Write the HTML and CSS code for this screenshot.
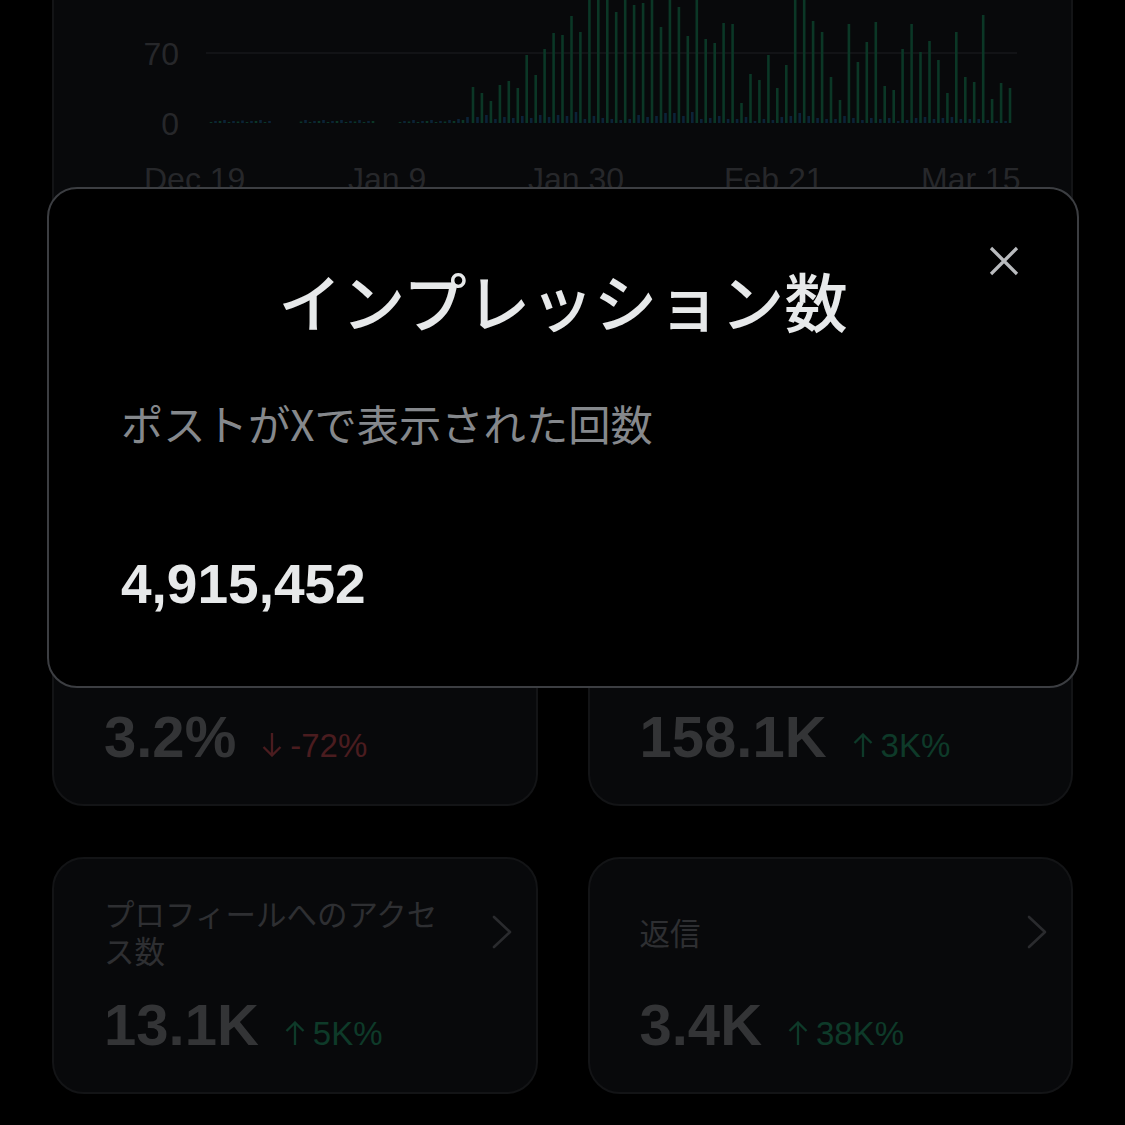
FILE: index.html
```html
<!DOCTYPE html>
<html lang="ja">
<head>
<meta charset="utf-8">
<title>インプレッション数</title>
<link rel="stylesheet" href="styles.css">
</head>
<body>
<div class="page">
  <section class="card chart-card">
    <svg class="chart" width="1018" height="240" viewBox="53 0 1018 240" xmlns="http://www.w3.org/2000/svg">
      <line class="grid-line" x1="205" y1="53" x2="1016" y2="53"/>
      <text class="axis-label" x="178" y="65" text-anchor="end">70</text>
      <text class="axis-label" x="178" y="135" text-anchor="end">0</text>
      <path class="bars-small-g" d="M210 123V122M219 123V121M228 123V122M237 123V121.5M246 123V122M255 123V121M264 123V122M300 123V121.5M309 123V122M318 123V121M327 123V122M336 123V121M345 123V122M354 123V121.5M363 123V122M372 123V121M399 123V122M408 123V121.5M417 123V122M426 123V121M435 123V122M444 123V121.5M453 123V121M462 123V120"/>
      <path class="bars-small-b" d="M214.5 123V121M223.5 123V120M232.5 123V121M241.5 123V120.5M250.5 123V121M259.5 123V120M268.5 123V121M304.5 123V120M313.5 123V121M322.5 123V120M331.5 123V121M340.5 123V120M349.5 123V121M358.5 123V120M367.5 123V121M403.5 123V121M412.5 123V120M421.5 123V121M430.5 123V120M439.5 123V121M448.5 123V120M457.5 123V119M466.5 123V117"/>
      <path class="bars-g" d="M472 123V87M480.9 123V93M489.9 123V101M498.9 123V85M507.8 123V81M516.8 123V88M525.7 123V55M534.7 123V75M543.6 123V49M552.6 123V33M561.5 123V35M570.5 123V16M579.4 123V32M588.4 123V-5M597.3 123V-5M606.3 123V-5M615.2 123V12M624.2 123V-5M633.1 123V5M642.1 123V3M651 123V-5M660 123V27M668.9 123V-5M677.9 123V7M686.8 123V36M695.8 123V-5M704.7 123V39M713.7 123V43M722.6 123V23M731.6 123V24M740.5 123V103M749.5 123V74M758.4 123V80M767.4 123V55M776.3 123V88M785.3 123V65M794.2 123V-5M803.2 123V-5M812.1 123V21M821.1 123V32M830 123V77M839 123V100M847.9 123V24M856.9 123V62M865.8 123V42M874.8 123V22M883.7 123V86M892.7 123V90M901.6 123V49M910.6 123V24M919.5 123V52M928.5 123V41M937.4 123V60M946.4 123V93M955.3 123V32M964.3 123V77M973.2 123V82M982.2 123V15M991.1 123V99M1000.1 123V83M1009 123V88"/>
      <path class="bars-b" d="M476.5 123V117M485.4 123V115M494.4 123V119M503.4 123V117M512.3 123V118M521.3 123V116M530.2 123V118M539.2 123V115M548.1 123V117M557.1 123V115M566 123V116M575 123V112M583.9 123V119M592.9 123V116M601.8 123V118M610.8 123V119M619.7 123V120M628.7 123V119M637.6 123V115M646.6 123V117M655.5 123V116M664.5 123V113M673.4 123V113M682.4 123V116M691.3 123V112M700.3 123V119M709.2 123V118M718.2 123V116M727.1 123V119M736.1 123V119M745 123V117M754 123V121M762.9 123V119M771.9 123V120M780.8 123V117M789.8 123V116M798.7 123V113M807.7 123V116M816.6 123V118M825.6 123V119M834.5 123V119M843.5 123V116M852.4 123V118M861.4 123V120M870.3 123V118M879.3 123V119M888.2 123V118M897.2 123V121M906.1 123V120M915.1 123V118M924 123V117M933 123V119M941.9 123V118M950.9 123V117M959.8 123V119M968.8 123V119M977.7 123V119M986.7 123V120M995.6 123V121M1004.6 123V121"/>
      <text class="axis-label" x="143" y="190">Dec 19</text>
      <text class="axis-label" x="347" y="190">Jan 9</text>
      <text class="axis-label" x="527" y="190">Jan 30</text>
      <text class="axis-label" x="723" y="190">Feb 21</text>
      <text class="axis-label" x="920" y="190">Mar 15</text>
    </svg>
  </section>

  <div class="stats">
    <div class="card stat">
      <div class="stat-head">
        <span class="stat-label">エンゲージメント率</span>
        <svg class="chev" width="20" height="34" viewBox="0 0 20 34"><polyline points="2,2 18,17 2,32"/></svg>
      </div>
      <div class="stat-row">
        <span class="stat-value">3.2%</span>
        <span class="stat-change down"><svg class="arrow" width="20" height="24" viewBox="0 0 20 24"><path d="M10 0V22.5M1.5 14L10 22.5L18.5 14"/></svg>-72%</span>
      </div>
    </div>
    <div class="card stat">
      <div class="stat-head">
        <span class="stat-label">エンゲージメント</span>
        <svg class="chev" width="20" height="34" viewBox="0 0 20 34"><polyline points="2,2 18,17 2,32"/></svg>
      </div>
      <div class="stat-row">
        <span class="stat-value">158.1K</span>
        <span class="stat-change up"><svg class="arrow" width="20" height="24" viewBox="0 0 20 24"><path d="M10 24V1.5M1.5 10L10 1.5L18.5 10"/></svg>3K%</span>
      </div>
    </div>
    <div class="card stat">
      <div class="stat-head">
        <span class="stat-label">プロフィールへのアクセス数</span>
        <svg class="chev" width="20" height="34" viewBox="0 0 20 34"><polyline points="2,2 18,17 2,32"/></svg>
      </div>
      <div class="stat-row">
        <span class="stat-value">13.1K</span>
        <span class="stat-change up"><svg class="arrow" width="20" height="24" viewBox="0 0 20 24"><path d="M10 24V1.5M1.5 10L10 1.5L18.5 10"/></svg>5K%</span>
      </div>
    </div>
    <div class="card stat">
      <div class="stat-head">
        <span class="stat-label">返信</span>
        <svg class="chev" width="20" height="34" viewBox="0 0 20 34"><polyline points="2,2 18,17 2,32"/></svg>
      </div>
      <div class="stat-row">
        <span class="stat-value">3.4K</span>
        <span class="stat-change up"><svg class="arrow" width="20" height="24" viewBox="0 0 20 24"><path d="M10 24V1.5M1.5 10L10 1.5L18.5 10"/></svg>38K%</span>
      </div>
    </div>
  </div>
</div>

<div class="modal" role="dialog">
  <button class="modal-close" aria-label="閉じる">
    <svg width="30" height="30" viewBox="0 0 30 30"><path d="M2 2L28 28M28 2L2 28"/></svg>
  </button>
  <h2 class="modal-title">インプレッション数</h2>
  <p class="modal-desc">ポストがXで表示された回数</p>
  <p class="modal-number">4,915,452</p>
</div>
</body>
</html>
```

FILE: styles.css
```css
* { box-sizing: border-box; }

html, body {
  margin: 0;
  padding: 0;
  background: #000;
  overflow: hidden;
  height: 1125px;
}

body {
  font-family: "Liberation Sans", "Noto Sans CJK JP", sans-serif;
  color: #e7e9ea;
}

.page {
  padding: 0 52px;
  margin-top: -40px;
}

.card {
  background: #08090b;
  border: 2px solid #131416;
  border-radius: 32px;
}

.chart-card {
  height: 559px;
  padding-top: 38px;
}

.chart {
  display: block;
}

.grid-line {
  stroke: #121316;
  stroke-width: 2;
}

.axis-label {
  font-family: "Liberation Sans", sans-serif;
  font-size: 32px;
  fill: #26272a;
}

.bars-g, .bars-small-g {
  stroke: #0b3726;
  stroke-width: 2.6;
  fill: none;
}

.bars-b, .bars-small-b {
  stroke: #0c2338;
  stroke-width: 2.6;
  fill: none;
}

.stats {
  margin-top: 50px;
  display: grid;
  grid-template-columns: 1fr 1fr;
  column-gap: 50px;
  row-gap: 51px;
}

.stat {
  height: 237px;
  padding: 36px 24px 38px 50px;
}

.stat-head {
  display: flex;
  align-items: center;
  gap: 40px;
  min-height: 74px;
}

.stat-label {
  flex: 1;
  font-family: "Noto Sans CJK JP", sans-serif;
  font-size: 30.5px;
  line-height: 37px;
  color: #2e2f32;
}

.chev {
  flex: none;
  display: block;
}

.chev polyline {
  fill: none;
  stroke: #2a2b2e;
  stroke-width: 2.6;
  stroke-linecap: round;
  stroke-linejoin: round;
}

.stat-row {
  margin-top: 27px;
  display: flex;
  align-items: baseline;
  gap: 26px;
}

.stat-value {
  font-family: "Liberation Sans", sans-serif;
  font-weight: 700;
  font-size: 58px;
  line-height: 58px;
  color: #333436;
}

.stat-change {
  font-family: "Liberation Sans", sans-serif;
  font-size: 33px;
}

.stat-change .arrow {
  display: inline-block;
  margin-right: 8px;
  fill: none;
  stroke: currentColor;
  stroke-width: 2.3;
}

.stat-change.up { color: #0e3a29; }
.stat-change.down { color: #4a1c1f; }

.modal {
  position: fixed;
  left: 47px;
  top: 187px;
  width: 1032px;
  height: 501px;
  background: #000;
  border: 2px solid #3c3e42;
  border-radius: 30px;
  padding: 79px 72px 0 72px;
}

.modal-close {
  position: absolute;
  top: 57px;
  right: 58px;
  width: 30px;
  height: 30px;
  padding: 0;
  border: none;
  background: none;
}

.modal-close svg {
  display: block;
}

.modal-close path {
  stroke: #b9bbbe;
  stroke-width: 3.2;
  fill: none;
}

.modal-title {
  margin: 0;
  text-align: center;
  font-family: "Noto Sans CJK JP", sans-serif;
  font-weight: 500;
  font-size: 63.5px;
  line-height: 62px;
  color: #e7e9ea;
}

.modal-desc {
  margin: 72px 0 0 0;
  font-family: "Noto Sans CJK JP", sans-serif;
  font-size: 42.3px;
  line-height: 42px;
  color: #85888c;
}

.modal-number {
  margin: 113px 0 0 0;
  font-family: "Liberation Sans", sans-serif;
  font-weight: 700;
  font-size: 55px;
  line-height: 55px;
  color: #e7e9ea;
}
```
